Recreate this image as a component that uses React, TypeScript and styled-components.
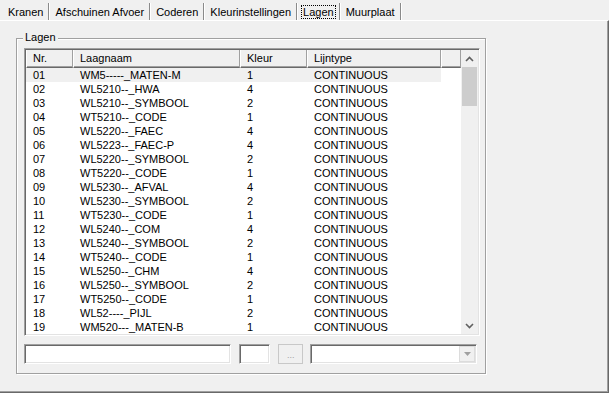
import React from 'react';
import styled, { createGlobalStyle } from 'styled-components';

const GlobalStyle = createGlobalStyle`
  body {
    margin: 0;
    background: #f0f0f0;
    font-family: 'Liberation Sans', Arial, sans-serif;
    font-size: 11px;
    color: #000;
  }
`;

const layers: [string, string, string][] = [
  ['01', 'WM5-----_MATEN-M', '1'],
  ['02', 'WL5210--_HWA', '4'],
  ['03', 'WL5210--_SYMBOOL', '2'],
  ['04', 'WT5210--_CODE', '1'],
  ['05', 'WL5220--_FAEC', '4'],
  ['06', 'WL5223--_FAEC-P', '4'],
  ['07', 'WL5220--_SYMBOOL', '2'],
  ['08', 'WT5220--_CODE', '1'],
  ['09', 'WL5230--_AFVAL', '4'],
  ['10', 'WL5230--_SYMBOOL', '2'],
  ['11', 'WT5230--_CODE', '1'],
  ['12', 'WL5240--_COM', '4'],
  ['13', 'WL5240--_SYMBOOL', '2'],
  ['14', 'WT5240--_CODE', '1'],
  ['15', 'WL5250--_CHM', '4'],
  ['16', 'WL5250--_SYMBOOL', '2'],
  ['17', 'WT5250--_CODE', '1'],
  ['18', 'WL52----_PIJL', '2'],
  ['19', 'WM520---_MATEN-B', '1'],
];

const tabs = ['Kranen', 'Afschuinen Afvoer', 'Coderen', 'Kleurinstellingen', 'Lagen', 'Muurplaat'];

const COLS = '47px 167px 67px 134px 20px';

const Window = styled.div`
  width: 609px;
  height: 393px;
  display: flex;
  flex-direction: column;
  overflow: hidden;
`;

const TabStrip = styled.div`
  height: 20px;
  display: flex;
  align-items: flex-end;
  padding-left: 2px;
`;

const Tab = styled.div<{ $active?: boolean }>`
  height: 17px;
  padding: 0 5px 0 6px;
  display: flex;
  align-items: center;
  border-right: 1px solid #8a8a8a;
  box-shadow: 1px 0 0 #fff;
`;

const TabLabel = styled.span<{ $active?: boolean }>`
  padding: 1px 2px;
  margin: 0 -2px;
  outline: ${(p) => (p.$active ? '1px dotted #000' : 'none')};
  outline-offset: -1px;
`;

const Panel = styled.div`
  flex: 1;
  border-top: 1px solid #fff;
  border-right: 1px solid #696969;
  border-bottom: 1px solid #696969;
  box-shadow: inset -1px -1px 0 #a0a0a0;
  padding: 17px 0 0 16px;
`;

const Group = styled.div`
  position: relative;
  width: 470px;
  height: 336px;
  border: 1px solid #a0a0a0;
  box-shadow: inset 1px 1px 0 #fff, 1px 1px 0 #fff;
  padding: 9px 0 0 7px;
  box-sizing: border-box;
  display: flex;
  flex-direction: column;
  gap: 8px;
`;

const Legend = styled.span`
  position: absolute;
  top: -8px;
  left: 6px;
  padding: 0 2px;
  background: #f0f0f0;
`;

const ListView = styled.div`
  width: 456px;
  height: 288px;
  box-sizing: border-box;
  border: 1px solid;
  border-color: #a0a0a0 #fff #fff #a0a0a0;
  box-shadow: inset 1px 1px 0 #696969, inset -1px -1px 0 #e3e3e3;
  padding: 1px;
  background: #fff;
  display: flex;
`;

const Table = styled.div`
  flex: 1;
  display: flex;
  flex-direction: column;
  overflow: hidden;
`;

const HeaderRow = styled.div`
  display: grid;
  grid-template-columns: ${COLS};
  height: 18px;
  flex-shrink: 0;
`;

const HeaderCell = styled.div`
  background: #f0f0f0;
  border-left: 1px solid #fff;
  border-right: 1px solid #a0a0a0;
  border-bottom: 1px solid #696969;
  box-shadow: inset 0 -1px 0 #a0a0a0;
  padding-left: 6px;
  line-height: 16px;
  white-space: nowrap;
`;

const Row = styled.div<{ $hot?: boolean }>`
  display: grid;
  grid-template-columns: ${COLS};
  height: 14px;
  line-height: 14px;
  flex-shrink: 0;
`;

const Cell = styled.div<{ $hot?: boolean }>`
  padding-left: 7px;
  white-space: nowrap;
  background: ${(p) => (p.$hot ? '#f0f0f0' : 'transparent')};
`;

const ScrollBar = styled.div`
  width: 17px;
  background: #f0f0f0;
  display: flex;
  flex-direction: column;
`;

const ScrollArrow = styled.div`
  height: 17px;
  display: flex;
  align-items: center;
  justify-content: center;
`;

const Thumb = styled.div`
  height: 39px;
  margin: 0 1px;
  background: #cdcdcd;
`;

const Track = styled.div`
  flex: 1;
`;

const Controls = styled.div`
  display: flex;
  align-items: center;
  height: 20px;
`;

const Sunken = styled.div<{ $w: number }>`
  width: ${(p) => p.$w}px;
  height: 20px;
  box-sizing: border-box;
  border: 1px solid;
  border-color: #a0a0a0 #fff #fff #a0a0a0;
  box-shadow: inset 1px 1px 0 #696969, inset -1px -1px 0 #e3e3e3;
  background: #fff;
  margin-right: 8px;
  display: flex;
  justify-content: flex-end;
`;

const DotsButton = styled.div`
  width: 25px;
  height: 20px;
  box-sizing: border-box;
  border: 1px solid #c8c8c8;
  background: #f0f0f0;
  color: #a0a0a0;
  font-size: 9px;
  display: flex;
  align-items: center;
  justify-content: center;
  margin-right: 7px;
  padding-top: 2px;
`;

const ComboButton = styled.div`
  width: 16px;
  margin: 1px;
  box-sizing: border-box;
  border: 1px solid #dcdcdc;
  background: #f0f0f0;
  display: flex;
  align-items: center;
  justify-content: center;
`;

const Chevron = ({ down }: { down?: boolean }) => (
  <svg width="9" height="6" viewBox="0 0 9 6">
    <polyline
      points={down ? '1,1 4.5,4.5 8,1' : '1,5 4.5,1.5 8,5'}
      fill="none"
      stroke="#606060"
      strokeWidth="1.6"
    />
  </svg>
);

const App = () => (
  <Window>
    <GlobalStyle />
    <TabStrip>
      {tabs.map((t) => (
        <Tab key={t}>
          <TabLabel $active={t === 'Lagen'}>{t}</TabLabel>
        </Tab>
      ))}
    </TabStrip>
    <Panel>
      <Group>
        <Legend>Lagen</Legend>
        <ListView>
          <Table>
            <HeaderRow>
              <HeaderCell>Nr.</HeaderCell>
              <HeaderCell>Laagnaam</HeaderCell>
              <HeaderCell>Kleur</HeaderCell>
              <HeaderCell>Lijntype</HeaderCell>
              <HeaderCell />
            </HeaderRow>
            {layers.map(([nr, name, kleur], i) => (
              <Row key={nr}>
                <Cell $hot={i === 0}>{nr}</Cell>
                <Cell $hot={i === 0}>{name}</Cell>
                <Cell $hot={i === 0}>{kleur}</Cell>
                <Cell $hot={i === 0}>CONTINUOUS</Cell>
                <Cell />
              </Row>
            ))}
          </Table>
          <ScrollBar>
            <ScrollArrow>
              <Chevron />
            </ScrollArrow>
            <Thumb />
            <Track />
            <ScrollArrow>
              <Chevron down />
            </ScrollArrow>
          </ScrollBar>
        </ListView>
        <Controls>
          <Sunken $w={208} />
          <Sunken $w={32} />
          <DotsButton>...</DotsButton>
          <Sunken $w={168}>
            <ComboButton>
              <svg width="7" height="4" viewBox="0 0 7 4">
                <polygon points="0,0 7,0 3.5,4" fill="#a0a0a0" />
              </svg>
            </ComboButton>
          </Sunken>
        </Controls>
      </Group>
    </Panel>
  </Window>
);

export default App;
